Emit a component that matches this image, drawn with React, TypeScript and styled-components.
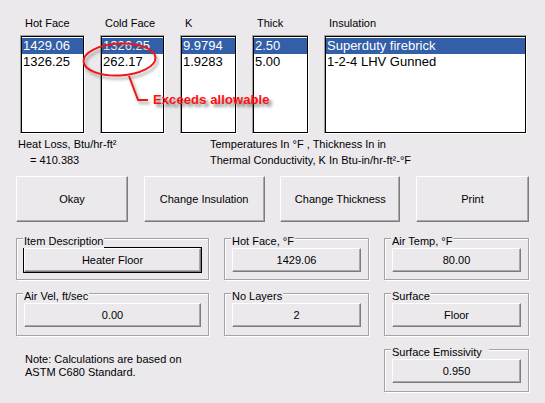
import React from 'react';
import styled, { createGlobalStyle } from 'styled-components';

const GlobalStyle = createGlobalStyle`
  html, body {
    margin: 0;
    padding: 0;
    background: #ece9ed;
  }
  body {
    font-family: "Liberation Sans", Arial, sans-serif;
    font-size: 11px;
    color: #000000;
  }
`;

interface IListColumn {
  title: string;
  width: number;
  items: string[];
}

interface IField {
  label: string;
  value: string;
  isDefault?: boolean;
}

const columns: IListColumn[] = [
  { title: 'Hot Face', width: 65, items: ['1429.06', '1326.25'] },
  { title: 'Cold Face', width: 65, items: ['1326.25', '262.17'] },
  { title: 'K', width: 57, items: ['9.9794', '1.9283'] },
  { title: 'Thick', width: 57, items: ['2.50', '5.00'] },
  { title: 'Insulation', width: 203, items: ['Superduty firebrick', '1-2-4 LHV Gunned'] },
];

const actions = [
  { label: 'Okay', width: 112 },
  { label: 'Change Insulation', width: 121 },
  { label: 'Change Thickness', width: 120 },
  { label: 'Print', width: 113 },
];

const fields: IField[] = [
  { label: 'Item Description', value: 'Heater Floor', isDefault: true },
  { label: 'Hot Face, °F', value: '1429.06' },
  { label: 'Air Temp, °F', value: '80.00' },
  { label: 'Air Vel, ft/sec', value: '0.00' },
  { label: 'No Layers', value: '2' },
  { label: 'Surface', value: 'Floor' },
];

const Window = styled.div`
  position: relative;
  width: 545px;
  height: 403px;
  overflow: hidden;
  background: #ece9ed;
`;

const ListRow = styled.div`
  display: flex;
  gap: 15px;
  padding: 17px 0 0 20px;
`;

const Column = styled.div<{ $width: number }>`
  display: flex;
  flex-direction: column;
  width: ${(props): number => props.$width}px;
`;

const Header = styled.div`
  height: 13px;
  line-height: 13px;
  padding-left: 5px;
  margin-bottom: 5px;
  white-space: nowrap;
`;

const ListFrame = styled.div`
  height: 99px;
  box-sizing: border-box;
  border-top: 1px solid #a0a0a0;
  border-left: 1px solid #a0a0a0;
  border-right: 1px solid #ffffff;
  border-bottom: 1px solid #ffffff;
`;

const ListBox = styled.div`
  height: 100%;
  box-sizing: border-box;
  border: 1px solid #000000;
  background: #ffffff;
  padding-top: 1px;
`;

const ListItem = styled.div<{ $selected: boolean }>`
  height: 16px;
  line-height: 16px;
  font-size: 13px;
  padding-left: 1px;
  white-space: nowrap;
  background: ${(props): string => (props.$selected ? '#335ea8' : 'transparent')};
  color: ${(props): string => (props.$selected ? '#ffffff' : '#000000')};
`;

const InfoRow = styled.div`
  display: flex;
  margin-top: 2px;
  line-height: 16px;
`;

const InfoLeft = styled.div`
  width: 192px;
  padding-left: 18px;
`;

const Indent = styled.div`
  padding-left: 12px;
`;

const ActionRow = styled.div`
  display: flex;
  justify-content: space-between;
  padding: 0 16px;
  margin-top: 8px;
`;

const Button3D = styled.button<{ $default?: boolean }>`
  box-sizing: border-box;
  margin: 0;
  padding: 0;
  font-family: "Liberation Sans", Arial, sans-serif;
  font-size: 11px;
  color: #000000;
  background: #ece9ed;
  border-top: 1px solid #ffffff;
  border-left: 1px solid #ffffff;
  border-right: 1px solid #7c7c7c;
  border-bottom: 1px solid #7c7c7c;
  box-shadow: inset -1px -1px 0 #a9a9a9
    ${(props): string => (props.$default ? ', 0 0 0 1px #000000' : '')};
`;

const ActionButton = styled(Button3D)<{ $width: number }>`
  width: ${(props): number => props.$width}px;
  height: 46px;
`;

const FieldGrid = styled.div`
  display: grid;
  grid-template-columns: 193px 145px 145px;
  grid-template-rows: 42px 43px 43px;
  column-gap: 15px;
  row-gap: 13px;
  padding-left: 16px;
  margin-top: 16px;
`;

const Group = styled.div`
  position: relative;
  box-sizing: border-box;
  border: 1px solid #a3a3a3;
  box-shadow: inset 1px 1px 0 #ffffff, 1px 1px 0 #ffffff;
  padding: 9px 7px 0;
`;

const Legend = styled.span`
  position: absolute;
  left: 6px;
  top: -4px;
  padding: 0 1px;
  line-height: 13px;
  background: #ece9ed;
  white-space: pre;
`;

const FieldButton = styled(Button3D)`
  width: 100%;
  height: 24px;
`;

const Note = styled.div`
  padding: 4px 0 0 9px;
  line-height: 13px;
`;

const Annotation = styled.svg`
  position: absolute;
  left: 0;
  top: 0;
  pointer-events: none;
`;

const Callout = styled.div`
  position: absolute;
  left: 153px;
  top: 93px;
  font-size: 13px;
  font-weight: bold;
  line-height: 14px;
  color: #ff1010;
  letter-spacing: 0.1px;
  text-shadow: 3px 3px 3px rgba(40, 40, 40, 0.55);
  white-space: nowrap;
`;

const FieldBox: React.FC<IField> = ({ label, value, isDefault }: IField) => (
  <Group>
    <Legend>{label}</Legend>
    <FieldButton $default={isDefault}>{value}</FieldButton>
  </Group>
);

const App: React.FC = () => (
  <Window>
    <GlobalStyle />
    <ListRow>
      {columns.map((col) => (
        <Column key={col.title} $width={col.width}>
          <Header>{col.title}</Header>
          <ListFrame>
            <ListBox>
              {col.items.map((item, i) => (
                <ListItem key={item} $selected={i === 0}>
                  {item}
                </ListItem>
              ))}
            </ListBox>
          </ListFrame>
        </Column>
      ))}
    </ListRow>

    <InfoRow>
      <InfoLeft>
        <div>Heat Loss, Btu/hr-ft²</div>
        <Indent>= 410.383</Indent>
      </InfoLeft>
      <div>
        <div>Temperatures In °F , Thickness In in</div>
        <div>Thermal Conductivity, K In Btu-in/hr-ft²-°F</div>
      </div>
    </InfoRow>

    <ActionRow>
      {actions.map((a) => (
        <ActionButton key={a.label} $width={a.width}>
          {a.label}
        </ActionButton>
      ))}
    </ActionRow>

    <FieldGrid>
      {fields.map((f) => (
        <FieldBox key={f.label} {...f} />
      ))}
      <Note>
        Note: Calculations are based on
        <br />
        ASTM C680 Standard.
      </Note>
      <div />
      <FieldBox label={'Surface Emissivity  '} value="0.950" />
    </FieldGrid>

    <Annotation width="160" height="112" viewBox="0 0 160 112">
      <defs>
        <filter id="soft" x="-20%" y="-20%" width="150%" height="160%">
          <feDropShadow dx="2" dy="3" stdDeviation="1.6" floodColor="#303030" floodOpacity="0.45" />
        </filter>
      </defs>
      <g filter="url(#soft)" fill="none" stroke="#f01818" strokeWidth="2">
        <ellipse cx="119.5" cy="59.5" rx="36" ry="16" transform="rotate(-3 119.5 59.5)" />
        <polyline points="129,76 138,100 148,100" strokeLinejoin="round" />
      </g>
    </Annotation>
    <Callout>Exceeds allowable</Callout>
  </Window>
);

export default App;
